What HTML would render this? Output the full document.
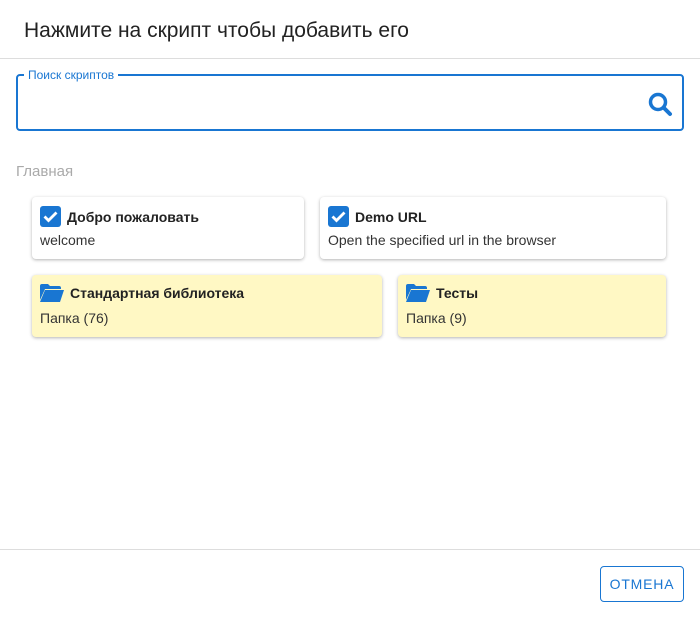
<!DOCTYPE html>
<html><head><meta charset="utf-8"><style>
body{margin:0;width:700px;height:618px;background:#fff;font-family:"Liberation Sans","Noto Sans CJK SC",sans-serif;position:relative;overflow:hidden;color:#222}
.a{position:absolute}
.card{position:absolute;background:#fff;border-radius:4px;box-shadow:0 1px 3px rgba(0,0,0,.3)}
.folder{background:#fff8c4}
.t{position:absolute;left:8px;top:9px;font-weight:bold;font-size:14px;display:flex;align-items:center;gap:6px;color:#222}
.s{position:absolute;left:8px;top:35px;font-size:14px;color:#333}
</style></head><body>
<div class="a" style="left:24px;top:19px;font-size:21px;color:#222">Нажмите на скрипт чтобы добавить его</div>
<div class="a" style="left:0;top:58px;width:700px;height:1px;background:#ddd"></div>
<div class="a" style="left:16px;top:74px;width:664px;height:53px;border:2px solid #1976d2;border-radius:4px"></div>
<div class="a" style="left:24px;top:68px;background:#fff;padding:0 4px;font-size:12px;color:#1976d2">Поиск скриптов</div>
<svg class="a" style="left:647px;top:91px" width="27" height="27" viewBox="0 0 27 27"><circle cx="11" cy="11" r="7.5" fill="none" stroke="#1976d2" stroke-width="3.5"/><line x1="16.5" y1="16.5" x2="23" y2="23" stroke="#1976d2" stroke-width="4" stroke-linecap="round"/></svg>
<div class="a" style="left:16px;top:163px;font-size:15px;color:#aaa">Главная</div>
<div class="card" style="left:32px;top:197px;width:272px;height:62px"><div class="t"><svg width="21" height="21" viewBox="0 0 21 21"><rect width="21" height="21" rx="3" fill="#1976d2"/><path d="M4.5 10.5l4 4 8-8" fill="none" stroke="#fff" stroke-width="2.8"/></svg>Добро пожаловать</div><div class="s">welcome</div></div>
<div class="card" style="left:320px;top:197px;width:346px;height:62px"><div class="t"><svg width="21" height="21" viewBox="0 0 21 21"><rect width="21" height="21" rx="3" fill="#1976d2"/><path d="M4.5 10.5l4 4 8-8" fill="none" stroke="#fff" stroke-width="2.8"/></svg>Demo URL</div><div class="s">Open the specified url in the browser</div></div>
<div class="card folder" style="left:32px;top:275px;width:350px;height:62px"><div class="t"><svg width="24" height="18" viewBox="0 0 24 18"><path d="M0 2a2 2 0 0 1 2-2h6l2 2h9a2 2 0 0 1 2 2v1H5L0 16z" fill="#1976d2"/><path d="M5 6h19l-4 12H0z" fill="#1976d2"/></svg>Стандартная библиотека</div><div class="s">Папка (76)</div></div>
<div class="card folder" style="left:398px;top:275px;width:268px;height:62px"><div class="t"><svg width="24" height="18" viewBox="0 0 24 18"><path d="M0 2a2 2 0 0 1 2-2h6l2 2h9a2 2 0 0 1 2 2v1H5L0 16z" fill="#1976d2"/><path d="M5 6h19l-4 12H0z" fill="#1976d2"/></svg>Тесты</div><div class="s">Папка (9)</div></div>
<div class="a" style="left:0;top:549px;width:700px;height:1px;background:#ddd"></div>
<div class="a" style="left:600px;top:566px;width:82px;height:34px;border:1px solid #1976d2;border-radius:4px;color:#1976d2;font-size:14px;letter-spacing:0.8px;text-align:center;line-height:34px">ОТМЕНА</div>
</body></html>
